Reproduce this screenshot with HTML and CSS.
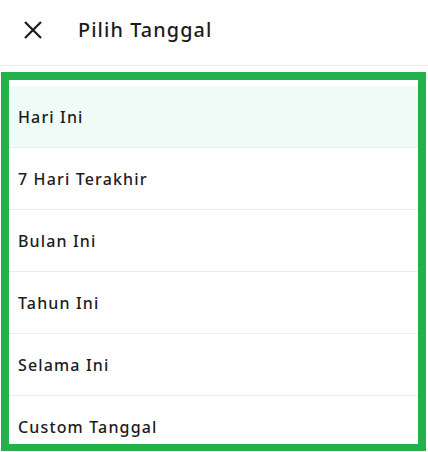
FILE: index.html
```html
<!DOCTYPE html>
<html lang="id">
<head>
<meta charset="utf-8">
<link rel="stylesheet" href="styles.css">
</head>
<body>
<div class="header">
  <svg class="close" width="18" height="18" viewBox="0 0 18 18"><path d="M1 1L17 17M17 1L1 17" stroke="#1c1c1c" stroke-width="2.2" fill="none"/></svg>
  <span class="title">Pilih Tanggal</span>
</div>
<div class="frame">
  <ul class="list">
    <li class="item active">Hari Ini</li>
    <li class="item">7 Hari Terakhir</li>
    <li class="item">Bulan Ini</li>
    <li class="item">Tahun Ini</li>
    <li class="item">Selama Ini</li>
    <li class="item last">Custom Tanggal</li>
  </ul>
</div>
</body>
</html>
```
FILE: styles.css
```css
html, body { margin: 0; padding: 0; background: #fff; }
body { font-family: "Noto Sans", "DejaVu Sans", sans-serif; color: #1c1c1c; width: 428px; height: 452px; overflow: hidden; }
.header { height: 66px; display: flex; align-items: center; padding-left: 24px; border-bottom: 1px solid #ebebeb; box-sizing: border-box; gap: 36px; }
.close { display: block; margin-top: -6px; }
.title { font-size: 19.8px; font-weight: 500; letter-spacing: 1.1px; margin-top: -6px; }
.frame { margin: 6px 2px 0 1px; border: 8px solid #22b14c; border-bottom-width: 7px; height: 364px; overflow: hidden; }
.list { list-style: none; margin: 0; padding: 6px 0 0; }
.item { border-bottom: 1px solid #ececec; display: flex; align-items: center; padding-left: 9px; font-size: 16px; font-weight: 500; letter-spacing: 1.15px; box-sizing: border-box; height: 62px; }
.item.active { background: #f0faf6; }
.item.last { border-bottom: none; }
```
